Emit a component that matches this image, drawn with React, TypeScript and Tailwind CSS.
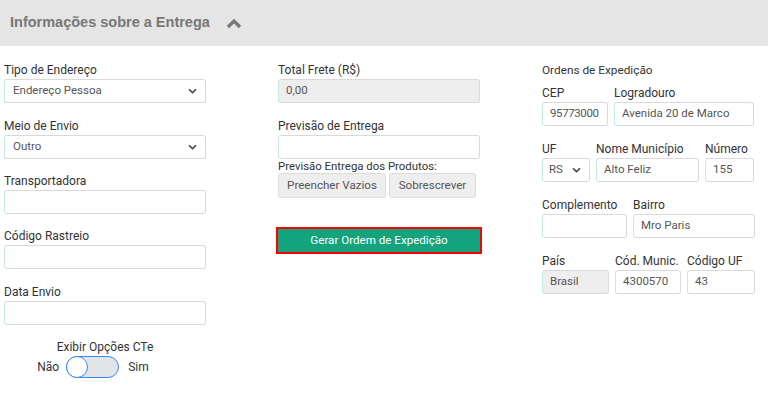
import React from "react";

const Chevron = () => (
  <svg width="9" height="6" viewBox="0 0 9 6" className="shrink-0">
    <path d="M1 1.2 L4.5 4.6 L8 1.2" fill="none" stroke="#444" strokeWidth="1.6" />
  </svg>
);

const inputBase =
  "h-[24px] rounded-[3px] border border-[#d9d9d9] border-l-[#c5ebe1] text-[11.5px] text-[#555] flex items-center px-[7px] box-border whitespace-nowrap";

function Input({ value = "", w, gray = false }: { value?: string; w: string; gray?: boolean }) {
  return <div className={`${inputBase} ${w} ${gray ? "bg-[#eeeeee]" : "bg-white"}`}>{value}</div>;
}

function Select({ value, w, pad = "px-[8px]" }: { value: string; w: string; pad?: string }) {
  return (
    <div className={`${inputBase} ${w} ${pad} justify-between bg-white`}>
      <span>{value}</span>
      <Chevron />
    </div>
  );
}

function Label({ children }: { children: React.ReactNode }) {
  return <div className="text-[12px] leading-[14px] text-[#333] mb-[2px] whitespace-nowrap">{children}</div>;
}

export default function App() {
  return (
    <div className="w-[768px] h-[396px] bg-white overflow-hidden" style={{ fontFamily: "Roboto, Arial, sans-serif" }}>
      <div className="h-[46px] bg-[#e5e5e5] flex items-center pl-[10px] gap-[16px]">
        <span className="text-[14.5px] font-bold text-[#777]" style={{ fontFamily: "'Liberation Sans', Arial, sans-serif" }}>
          Informações sobre a Entrega
        </span>
        <svg width="16" height="11" viewBox="0 0 16 11">
          <path d="M2 9 L8 3 L14 9" fill="none" stroke="#777" strokeWidth="3.2" strokeLinejoin="miter" />
        </svg>
      </div>

      <div className="flex pt-[17px]">
        {/* left column */}
        <div className="ml-[4px] w-[202px] flex flex-col">
          <Label>Tipo de Endereço</Label>
          <Select value="Endereço Pessoa" w="w-[202px]" />
          <div className="h-[16px]" />
          <Label>Meio de Envio</Label>
          <Select value="Outro" w="w-[202px]" />
          <div className="h-[15px]" />
          <Label>Transportadora</Label>
          <Input w="w-[202px]" />
          <div className="h-[15px]" />
          <Label>Código Rastreio</Label>
          <Input w="w-[202px]" />
          <div className="h-[16px]" />
          <Label>Data Envio</Label>
          <Input w="w-[202px]" />
          <div className="mt-[15px] flex flex-col items-center">
            <div className="text-[12px] leading-[14px] text-[#333]">Exibir Opções CTe</div>
            <div className="flex items-center mt-[2px] mr-[24px]">
              <span className="text-[12px] text-[#333]">Não</span>
              <div className="ml-[7px] w-[53px] h-[22px] rounded-full border-[1.5px] border-[#3b87f5] bg-[#e1e5e8] relative box-border">
                <div className="absolute left-[-1.5px] top-[-1.5px] w-[22px] h-[22px] rounded-full bg-white border-[1.5px] border-[#3b87f5] box-border" />
              </div>
              <span className="ml-[9px] text-[12px] text-[#333]">Sim</span>
            </div>
          </div>
        </div>

        {/* middle column */}
        <div className="ml-[70px] w-[206px] flex flex-col">
          <div className="ml-[2px] flex flex-col">
            <Label>Total Frete (R$)</Label>
            <Input value="0,00" w="w-[202px]" gray />
            <div className="h-[16px]" />
            <Label>Previsão de Entrega</Label>
            <Input w="w-[202px]" />
            <div className="text-[11.4px] leading-[14px] text-[#333]">Previsão Entrega dos Produtos:</div>
            <div className="flex gap-[3px]">
              <div className="h-[25px] w-[108px] rounded-[3px] bg-[#eeeeee] border border-[#dcdcdc] text-[11.6px] text-[#555] flex items-center justify-center">
                Preencher Vazios
              </div>
              <div className="h-[25px] w-[87px] rounded-[3px] bg-[#eeeeee] border border-[#dcdcdc] text-[11.6px] text-[#555] flex items-center justify-center">
                Sobrescrever
              </div>
            </div>
          </div>
          <div className="mt-[29px] h-[27px] w-[206px] border-2 border-[#ff0000] bg-[#13a37d] text-white text-[11.6px] flex items-center justify-center box-border">
            Gerar Ordem de Expedição
          </div>
        </div>

        {/* right column */}
        <div className="ml-[60px] w-[213px] flex flex-col">
          <div className="text-[11.8px] leading-[14px] text-[#333] mb-[2px] whitespace-nowrap">Ordens de Expedição</div>
          <div className="h-[7px]" />
          <div className="flex gap-[6px]">
            <div className="flex flex-col">
              <Label>CEP</Label>
              <div className={`${inputBase} w-[66px] bg-white tracking-[-0.4px]`}>95773000</div>
            </div>
            <div className="flex flex-col">
              <Label>Logradouro</Label>
              <Input value="Avenida 20 de Marco" w="w-[140px]" />
            </div>
          </div>
          <div className="h-[16px]" />
          <div className="flex gap-[6px]">
            <div className="flex flex-col">
              <Label>UF</Label>
              <Select value="RS" w="w-[48px]" pad="pl-[6px] pr-[8px]" />
            </div>
            <div className="flex flex-col">
              <Label>Nome Município</Label>
              <Input value="Alto Feliz" w="w-[103px]" />
            </div>
            <div className="flex flex-col">
              <Label>Número</Label>
              <Input value="155" w="w-[49px]" />
            </div>
          </div>
          <div className="h-[16px]" />
          <div className="flex gap-[6px]">
            <div className="flex flex-col">
              <Label>Complemento</Label>
              <Input w="w-[85px]" />
            </div>
            <div className="flex flex-col">
              <Label>Bairro</Label>
              <Input value="Mro Paris" w="w-[122px]" />
            </div>
          </div>
          <div className="h-[16px]" />
          <div className="flex gap-[6px]">
            <div className="flex flex-col">
              <Label>País</Label>
              <Input value="Brasil" w="w-[67px]" gray />
            </div>
            <div className="flex flex-col">
              <Label>Cód. Munic.</Label>
              <Input value="4300570" w="w-[66px]" />
            </div>
            <div className="flex flex-col">
              <Label>Código UF</Label>
              <Input value="43" w="w-[68px]" />
            </div>
          </div>
        </div>
      </div>
    </div>
  );
}
